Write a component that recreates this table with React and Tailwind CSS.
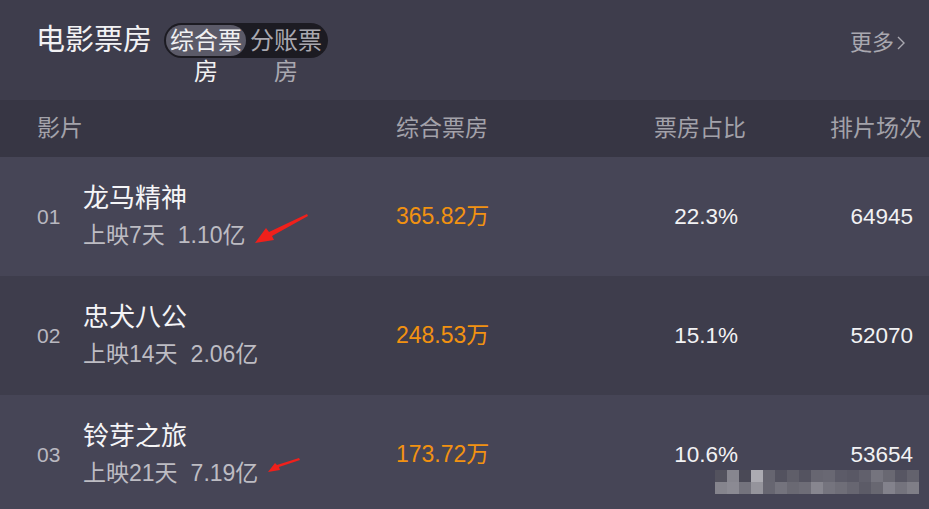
import React from "react";

const rows = [
  { no: "01", name: "龙马精神", days: "上映7天", total: "1.10亿", box: "365.82万", ratio: "22.3%", sessions: "64945", bg: "bg-[#464556]", arrow: "big" },
  { no: "02", name: "忠犬八公", days: "上映14天", total: "2.06亿", box: "248.53万", ratio: "15.1%", sessions: "52070", bg: "bg-[#3e3d4c]", arrow: null },
  { no: "03", name: "铃芽之旅", days: "上映21天", total: "7.19亿", box: "173.72万", ratio: "10.6%", sessions: "53654", bg: "bg-[#464556]", arrow: "small" },
];

const mosaicTop = [
  "bg-[#55545f]", "bg-[#8f8e96]", "bg-[#4b4a57]", "bg-[#b8b7bd]", "bg-[#6a6973]", "bg-[#555461]",
  "bg-[#62616c]", "bg-[#565562]", "bg-[#6b6a74]", "bg-[#6d6c77]", "bg-[#5f5e6a]", "bg-[#5c5b67]",
  "bg-[#65646f]", "bg-[#7b7a83]", "bg-[#6d6c76]", "bg-[#595865]", "bg-[#676670]",
];
const mosaicBottom = [
  "bg-[#8c8b93]", "bg-[#93929a]", "bg-[#7a7982]", "bg-[#9e9da4]", "bg-[#6b6a74]", "bg-[#7a7982]",
  "bg-[#6e6d77]", "bg-[#73727b]", "bg-[#8f8e96]", "bg-[#7b7a83]", "bg-[#74737c]", "bg-[#6b6a74]",
  "bg-[#5f5e69]", "bg-[#6c6b75]", "bg-[#8a8992]", "bg-[#7a7982]", "bg-[#86858d]",
];

function BigArrow() {
  return (
    <svg className="absolute left-[250px] top-[54px]" width="62" height="36" viewBox="0 0 62 36">
      <polygon points="57,3 58,5 22,25 24,29 5,32 16,17 19,21" fill="#f0201b" />
    </svg>
  );
}

function SmallArrow() {
  return (
    <svg className="absolute left-[264px] top-[60px]" width="40" height="20" viewBox="0 0 40 20">
      <polygon points="35,3 36,5 15,12 16,15 4,17 11,8 13,10" fill="#f0201b" />
    </svg>
  );
}

export default function App() {
  return (
    <div className="w-[929px] h-[509px] overflow-hidden relative bg-[#3e3d4c] font-['Liberation_Sans','Noto_Sans_CJK_SC',sans-serif]">
      {/* Title bar */}
      <div className="h-[100px] flex items-start pt-[23px] pl-[36px] pr-[24px] bg-[#3e3d4c]">
        <div className="text-[29px] leading-[35px] text-[#f2f2f4]">电影票房</div>
        <div className="ml-[12px] h-[35px] flex p-[2px] rounded-full bg-[#1c1b22]">
          <div className="w-[80px] h-[31px] rounded-full bg-[#5b5a68] text-[24px] leading-[31px] text-center text-[#f0f0f2] break-all">
            综合票房
          </div>
          <div className="w-[80px] h-[31px] rounded-full text-[24px] leading-[31px] text-center text-[#a9a8b0] break-all">
            分账票房
          </div>
        </div>
        <div className="ml-auto flex items-center h-[35px] mt-[2px] text-[22px] text-[#a9a8b0]">
          <span>更多</span>
          <svg className="ml-[3px]" width="8" height="14" viewBox="0 0 8 14">
            <polyline points="1,1 7,7 1,13" fill="none" stroke="#a9a8b0" strokeWidth="1.4" />
          </svg>
        </div>
      </div>

      {/* Header */}
      <div className="h-[57px] flex items-center pl-[37px] bg-[#373644] text-[23px] text-[#a3a2aa]">
        <div className="w-[359px]">影片</div>
        <div className="w-[258px]">综合票房</div>
        <div className="w-[92px] whitespace-nowrap">票房占比</div>
        <div className="ml-[84px] whitespace-nowrap">排片场次</div>
      </div>

      {/* Rows */}
      {rows.map((r) => (
        <div key={r.no} className={`relative h-[119px] flex items-center pl-[37px] ${r.bg}`}>
          <div className="w-[46px] text-[21px] text-[#b9b8c0]">{r.no}</div>
          <div className="w-[313px] flex flex-col">
            <div className="text-[26px] leading-[37px] text-[#f5f5f7]">{r.name}</div>
            <div className="text-[23px] leading-[37px] text-[#bdbcc3] whitespace-nowrap">
              {r.days}
              <span className="ml-[13px]">{r.total}</span>
            </div>
          </div>
          <div className="w-[250px] text-[23px] text-[#f29211]">{r.box}</div>
          <div className="w-[92px] text-right text-[22.5px] text-[#f2f2f4]">{r.ratio}</div>
          <div className="w-[175px] text-right text-[22.5px] text-[#f2f2f4]">{r.sessions}</div>
          {r.arrow === "big" && <BigArrow />}
          {r.arrow === "small" && <SmallArrow />}
        </div>
      ))}

      {/* Blurred watermark */}
      <div className="absolute left-[715px] top-[470px] flex flex-col opacity-90">
        <div className="flex">
          {mosaicTop.map((c, i) => (
            <div key={i} className={`w-[12px] h-[12px] ${c}`} />
          ))}
        </div>
        <div className="flex">
          {mosaicBottom.map((c, i) => (
            <div key={i} className={`w-[12px] h-[12px] ${c}`} />
          ))}
        </div>
      </div>
    </div>
  );
}
